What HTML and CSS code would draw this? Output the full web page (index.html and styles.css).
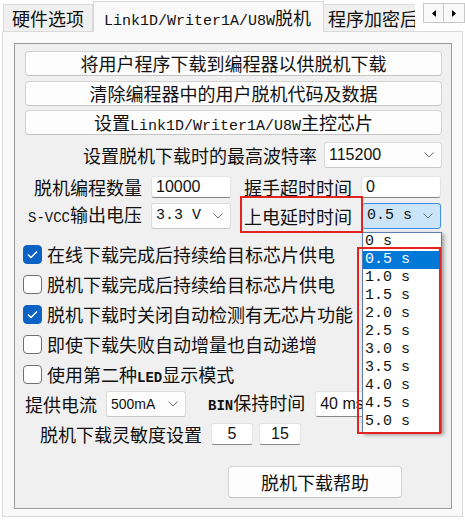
FILE: index.html
```html
<!DOCTYPE html>
<html lang="zh-CN">
<head>
    <meta charset="UTF-8">
    <meta name="viewport" content="width=device-width, initial-scale=1.0">
    <title>脱机下载设置</title>
    <link rel="stylesheet" href="styles.css">
</head>
<body>
<div class="window">
    <div class="tabbar">
        <div class="tab">硬件选项</div>
        <div class="tab active"><span class="mono">Link1D/Writer1A/U8W</span>脱机</div>
        <div class="tab clipped">程序加密后</div>
        <div class="scroller">
            <span class="scroll-btn"><svg width="4" height="7" viewBox="0 0 4 7"><polygon points="4,0 4,7 0,3.5" fill="#000"/></svg></span>
            <span class="scroll-btn"><svg width="4" height="7" viewBox="0 0 4 7"><polygon points="0,0 0,7 4,3.5" fill="#000"/></svg></span>
        </div>
    </div>

    <div class="panel">
        <div class="group">
            <button class="wide">将用户程序下载到编程器以供脱机下载</button>
            <button class="wide">清除编程器中的用户脱机代码及数据</button>
            <button class="wide">设置<span class="mono">Link1D/Writer1A/U8W</span>主控芯片</button>

            <div class="row baud">
                <span>设置脱机下载时的最高波特率</span>
                <div class="combo num baud-combo">115200<svg class="chev" width="10" height="6" viewBox="0 0 10 6"><polyline points="0.5,0.5 5,5 9.5,0.5" fill="none" stroke="#707070"/></svg></div>
            </div>

            <div class="fields">
                <span class="label">脱机编程数量</span>
                <div class="edit">10000</div>
                <span class="label">握手超时时间</span>
                <div class="edit">0</div>
                <span class="label"><span class="mono small">S-VCC</span>输出电压</span>
                <div class="combo mono-val">3.3 V<svg class="chev" width="10" height="6" viewBox="0 0 10 6"><polyline points="0.5,0.5 5,5 9.5,0.5" fill="none" stroke="#707070"/></svg></div>
                <span class="label">上电延时时间</span>
                <div class="combo mono-val focused">0.5 s<svg class="chev" width="10" height="6" viewBox="0 0 10 6"><polyline points="0.5,0.5 5,5 9.5,0.5" fill="none" stroke="#5a6f86"/></svg></div>
            </div>

            <ul class="checks">
                <li><span class="box on"><svg width="11" height="9" viewBox="0 0 11 9"><polyline points="1,4.5 4,7.5 10,1.5" fill="none" stroke="#fff" stroke-width="1.4"/></svg></span><span>在线下载完成后持续给目标芯片供电</span></li>
                <li><span class="box"></span><span>脱机下载完成后持续给目标芯片供电</span></li>
                <li><span class="box on"><svg width="11" height="9" viewBox="0 0 11 9"><polyline points="1,4.5 4,7.5 10,1.5" fill="none" stroke="#fff" stroke-width="1.4"/></svg></span><span>脱机下载时关闭自动检测有无芯片功能</span></li>
                <li><span class="box"></span><span>即使下载失败自动增量也自动递增</span></li>
                <li><span class="box"></span><span>使用第二种<span class="mono bold">LED</span>显示模式</span></li>
            </ul>

            <div class="row current">
                <span>提供电流</span>
                <div class="combo ma">500mA<svg class="chev" width="10" height="6" viewBox="0 0 10 6"><polyline points="0.5,0.5 5,5 9.5,0.5" fill="none" stroke="#707070"/></svg></div>
                <span class="bin-label"><span class="mono bold">BIN</span>保持时间</span>
                <div class="edit mono-val hold">40 ms</div>
            </div>

            <div class="row sens">
                <span>脱机下载灵敏度设置</span>
                <div class="edit center">5</div>
                <div class="edit center">15</div>
            </div>

            <button class="help">脱机下载帮助</button>
        </div>
    </div>

    <!-- open list of the power-on delay combo -->
    <ul class="dropdown">
        <li>0 s</li>
        <li class="sel">0.5 s</li>
        <li>1.0 s</li>
        <li>1.5 s</li>
        <li>2.0 s</li>
        <li>2.5 s</li>
        <li>3.0 s</li>
        <li>3.5 s</li>
        <li>4.0 s</li>
        <li>4.5 s</li>
        <li>5.0 s</li>
    </ul>
    <div class="mark mark-label"></div>
    <div class="mark mark-list"></div>
</div>
</body>
</html>
```

FILE: styles.css
```css
* {
    box-sizing: border-box;
}
body {
    margin: 0;
    background: #fff;
    font-family: "Noto Sans CJK SC", sans-serif;
    font-size: 18px;
    color: #111;
}
.window {
    position: relative;
    width: 465px;
    height: 522px;
    overflow: hidden;
}
.mono {
    font-family: "Liberation Mono", monospace;
    font-size: 15px;
}
.mono.small {
    font-size: 14px;
}
.mono.bold {
    font-size: 14px;
    font-weight: bold;
}

/* tabs */
.tabbar {
    display: flex;
    align-items: flex-start;
    height: 32px;
    padding-left: 3px;
    position: relative;
    z-index: 1;
}
.tab {
    height: 27px;
    margin-top: 4px;
    line-height: 26px;
    padding: 0 8px;
    background: #f0f0f0;
    border: 1px solid #d9d9d9;
    border-bottom: none;
    white-space: nowrap;
}
.tab.active {
    width: 231px;
    height: 31px;
    margin-top: 1px;
    line-height: 30px;
    padding: 0 0 0 10px;
    background: #f9f9f9;
    border-bottom: none;
}
.tab.clipped {
    width: 91px;
    padding-left: 4px;
    overflow: hidden;
    border-left: none;
    border-right: none;
}
.scroller {
    display: flex;
    margin: 3px 0 0 8px;
}
.scroll-btn {
    width: 21px;
    height: 20px;
    display: flex;
    align-items: center;
    justify-content: center;
    background: #f9f9f9;
    border: 1px solid #c8c8c8;
}
.scroll-btn + .scroll-btn {
    border-left: none;
}

/* panel and group box */
.panel {
    margin: -1px 0 0 2px;
    width: 461px;
    height: 486px;
    padding: 11px 0 0 11px;
    background: #f9f9f9;
    border: 1px solid #dadada;
}
.group {
    width: 438px;
    height: 466px;
    padding-top: 7px;
    background: #f0f0f0;
    border: 1px solid #9a9a9a;
    box-shadow: 1px 1px 0 #fff;
}

button {
    font-family: inherit;
    font-size: 18px;
    color: #111;
    background: #fdfdfd;
    border: 1px solid #d3d3d3;
    border-bottom-color: #c4c4c4;
    border-radius: 4px;
    padding: 0;
}
.wide {
    display: block;
    width: 417px;
    height: 25px;
    line-height: 23px;
    margin: 0 0 5px 10px;
}
.wide:nth-of-type(2) {
    margin-bottom: 4px;
}

.row {
    display: flex;
    align-items: center;
    line-height: 24px;
}
.baud {
    height: 26px;
    margin-top: 7px;
    justify-content: flex-end;
    padding-right: 9px;
    gap: 7px;
}
.combo {
    display: flex;
    align-items: center;
    justify-content: space-between;
    height: 26px;
    padding: 0 7px 0 4px;
    background: #fdfdfd;
    border: 1px solid #dcdcdc;
    border-bottom-color: #c8c8c8;
    border-radius: 3px;
}
.num {
    font-family: "Liberation Sans", sans-serif;
    font-size: 16px;
}
.baud-combo {
    width: 118px;
}
.mono-val {
    font-family: "Liberation Mono", monospace;
    font-size: 15px;
    white-space: pre;
}
.combo.focused {
    background: #cce4f7;
    border-color: #3d8ee0;
    margin-left: 1px;
}
.edit {
    height: 22px;
    line-height: 20px;
    padding: 0 4px;
    background: #fff;
    border: 1px solid #e4e4e4;
    border-bottom-color: #868686;
    border-radius: 3px;
    font-family: "Liberation Sans", sans-serif;
    font-size: 16px;
}
.edit.center {
    text-align: center;
    width: 42px;
}

.fields {
    display: grid;
    grid-template-columns: 127px 80px 112px 80px;
    grid-template-rows: 24px 28px;
    column-gap: 9px;
    row-gap: 3px;
    align-items: center;
    margin-top: 7px;
    line-height: 24px;
}
.label {
    text-align: right;
    white-space: nowrap;
}

.checks {
    list-style: none;
    margin: 9px 0 0;
    padding: 0 0 0 8px;
}
.checks li {
    display: flex;
    align-items: center;
    gap: 5px;
    height: 30px;
}
.box {
    width: 19px;
    height: 19px;
    display: flex;
    align-items: center;
    justify-content: center;
    background: #fff;
    border: 1px solid #707070;
    border-radius: 4px;
}
.box.on {
    background: #0a63c4;
    border-color: #0a63c4;
}

.current {
    height: 28px;
    margin-top: 1px;
    padding-left: 10px;
}
.ma {
    width: 80px;
    margin-left: 9px;
    font-family: "Liberation Sans", sans-serif;
    font-size: 14px;
}
.bin-label {
    margin-left: 22px;
}
.hold {
    width: 62px;
    height: 26px;
    line-height: 24px;
    margin-left: 10px;
    overflow: hidden;
}

.sens {
    height: 24px;
    margin-top: 4px;
    padding-left: 25px;
    gap: 6px;
}
.sens .edit:first-of-type {
    margin-left: 3px;
}

.help {
    display: block;
    width: 174px;
    height: 32px;
    margin: 20px 0 0 213px;
    line-height: 30px;
}

/* open dropdown list */
.dropdown {
    position: absolute;
    left: 362px;
    top: 232px;
    width: 80px;
    height: 201px;
    margin: 0;
    padding: 0;
    list-style: none;
    background: #fff;
    border: 1px solid #5b7db3;
    box-shadow: 2px 2px 4px rgba(0, 0, 0, 0.35);
    font-family: "Liberation Mono", monospace;
    font-size: 15px;
    overflow: hidden;
}
.dropdown li {
    height: 18px;
    line-height: 18px;
    padding-left: 2px;
    white-space: pre;
}
.dropdown li.sel {
    background: #0078d7;
    color: #fff;
}

/* red annotation frames */
.mark {
    position: absolute;
    border: 2px solid #e2231f;
}
.mark-label {
    left: 240px;
    top: 196px;
    width: 123px;
    height: 37px;
}
.mark-list {
    left: 357px;
    top: 247px;
    width: 84px;
    height: 187px;
}
```
